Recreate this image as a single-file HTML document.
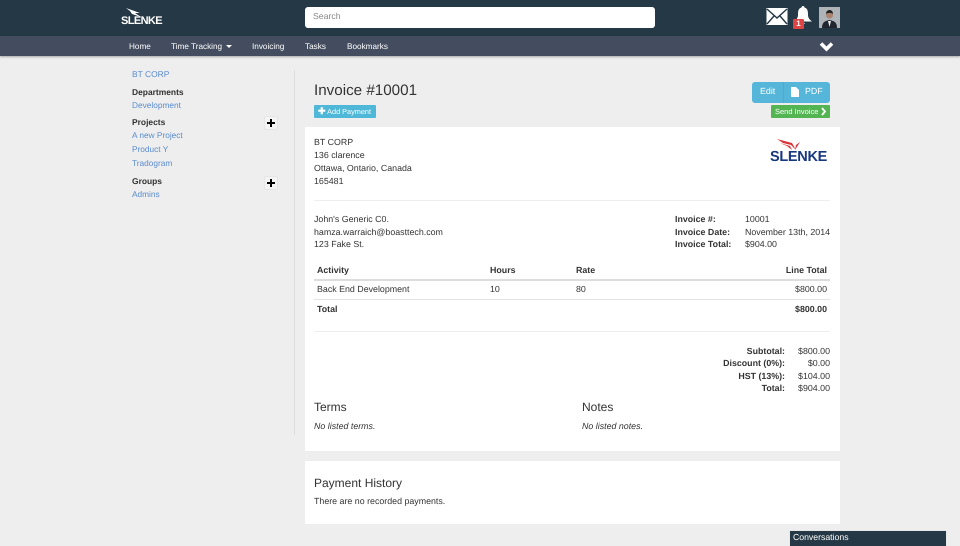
<!DOCTYPE html>
<html><head><meta charset="utf-8">
<style>
html,body{margin:0;padding:0}
body{width:960px;height:546px;overflow:hidden;background:#eee;position:relative;font-family:"Liberation Sans",Arial,sans-serif;font-size:8.85px;color:#333;text-rendering:geometricPrecision}
.a{position:absolute;white-space:nowrap;line-height:12px}
.b{font-weight:bold}
.l{color:#5b8dd0;font-size:8.3px}
.s{font-size:8.45px}
.n{font-size:8.2px}
.r{text-align:right}
.box{position:absolute;background:#fff}
.ln{position:absolute;height:1px;background:#eee}
.w{color:#fff}
.plus{position:absolute;left:264px;width:14px;height:14px;background:#f4f4f4;border-radius:2px;border:1px solid #e6e6e6;box-sizing:border-box}
.plus:before{content:"";position:absolute;left:2px;top:5px;width:8px;height:2px;background:#000}
.plus:after{content:"";position:absolute;left:5px;top:2px;width:2px;height:8px;background:#000}
</style></head><body>
<div style="position:absolute;left:0;top:0;width:960px;height:36px;background:#243845"></div>
<div style="position:absolute;left:0;top:36px;width:960px;height:20px;background:#434d5f;box-shadow:0 1px 2px rgba(0,0,0,.3)"></div>

<svg style="position:absolute;left:122px;top:7px" width="30" height="12" viewBox="0 0 30 12"><path d="M4 1l14 5-5 0 6 4-9-3-2-3z" fill="#fff"/></svg>
<div class="a b w" style="left:121px;top:15px;font-size:11px;letter-spacing:-.6px">SLENKE</div>

<div style="position:absolute;left:305px;top:7px;width:350px;height:21px;background:#fff;border-radius:3px"></div>
<div class="a" style="left:313px;top:10px;color:#888;font-size:8.7px">Search</div>

<svg style="position:absolute;left:766px;top:8px" width="22" height="17" viewBox="0 0 22 17"><rect width="21" height="17" x=".5" fill="#fff"/><path d="M1 1l10 9 10-9M1 16l7-8M21 16l-7-8" fill="none" stroke="#243845" stroke-width="1.4"/></svg>
<svg style="position:absolute;left:794px;top:6px" width="18" height="20" viewBox="0 0 18 20"><path d="M9 0c1 0 1.500.8 1.500 1.500C14 2.500 14 6 14 9c0 3 2 5 4 6.500H0C2 14 4 12 4 9c0-3 0-6.500 3.500-7.500C7.500.8 8 0 9 0z" fill="#fff"/><path d="M7 17h4l-2 2.500z" fill="#fff"/></svg>
<div style="position:absolute;left:793px;top:19px;width:11px;height:10px;background:#e04343;border-radius:1px;color:#fff;font-size:8px;line-height:10px;text-align:center;font-weight:bold">1</div>
<svg style="position:absolute;left:819px;top:7px" width="21" height="21" viewBox="0 0 21 21"><rect width="21" height="21" fill="#aeb4b8"/><path d="M3 21c0-6 3-7 7.500-8 4.500 1 7.500 2 7.500 8z" fill="#22262e"/><path d="M9 14h3l-1.500 6z" fill="#eee"/><circle cx="10.500" cy="8" r="3.600" fill="#a98470"/><path d="M7 7c0-3 2-4 3.500-4S14 4 14 7c-2-1.500-5-1.500-7 0z" fill="#222"/></svg>

<div class="a w n" style="left:129px;top:41px">Home</div>
<div class="a w n" style="left:171px;top:41px">Time Tracking</div>
<div style="position:absolute;left:226px;top:45px;border:3px solid transparent;border-top-color:#fff;border-bottom:0"></div>
<div class="a w n" style="left:252px;top:41px">Invoicing</div>
<div class="a w n" style="left:305px;top:41px">Tasks</div>
<div class="a w n" style="left:347px;top:41px">Bookmarks</div>
<svg style="position:absolute;left:819px;top:41px" width="15" height="11" viewBox="0 0 15 11"><path d="M2 2.500l5.500 5.500 5.500-5.500" fill="none" stroke="#fff" stroke-width="3.600"/></svg>

<div class="a l s" style="left:132px;top:68px">BT CORP</div>
<div class="a b s" style="left:132px;top:86px">Departments</div>
<div class="a l" style="left:132px;top:99px">Development</div>
<div class="a b s" style="left:132px;top:116px">Projects</div>
<div class="plus" style="top:116px"></div>
<div class="a l" style="left:132px;top:129px">A new Project</div>
<div class="a l" style="left:132px;top:143px">Product Y</div>
<div class="a l" style="left:132px;top:157px">Tradogram</div>
<div class="a b s" style="left:132px;top:175px">Groups</div>
<div class="plus" style="top:176px"></div>
<div class="a l" style="left:132px;top:188px">Admins</div>

<div style="position:absolute;left:294px;top:70px;width:1px;height:365px;background:#ddd"></div>

<div class="a" style="left:314px;top:82px;font-size:15.2px;line-height:18px">Invoice #10001</div>
<div style="position:absolute;left:314px;top:105px;width:62px;height:13px;background:#4fb8d8;border-radius:1px"></div>
<div class="a w" style="left:318px;top:105px;font-size:7.3px;line-height:13px"><b style="font-size:9px;line-height:12px">✚</b> Add Payment</div>

<div style="position:absolute;left:752px;top:82px;width:78px;height:21px;background:#55b6d9;border-radius:3px"></div>
<div style="position:absolute;left:783px;top:82px;width:1px;height:21px;background:#4dabcd"></div>
<div class="a w" style="left:760px;top:85px">Edit</div>
<svg style="position:absolute;left:791px;top:87px" width="8" height="10" viewBox="0 0 8 10"><path d="M0 0h5l3 3v7H0z" fill="#fff"/></svg>
<div class="a w" style="left:805px;top:85px">PDF</div>
<div style="position:absolute;left:771px;top:105px;width:59px;height:13px;background:#52b552;border-radius:1px"></div>
<div class="a w" style="left:775px;top:105px;font-size:7.5px;line-height:13px">Send Invoice</div>
<svg style="position:absolute;left:821px;top:107px" width="6" height="9" viewBox="0 0 6 9"><path d="M1 1l3 3.500-3 3.500" fill="none" stroke="#fff" stroke-width="1.800"/></svg>

<div class="box" style="left:305px;top:127px;width:535px;height:324px"></div>
<div class="box" style="left:305px;top:461px;width:535px;height:63px"></div>

<div class="a" style="left:314px;top:136px">BT CORP</div>
<div class="a" style="left:314px;top:149px">136 clarence</div>
<div class="a" style="left:314px;top:162px">Ottawa, Ontario, Canada</div>
<div class="a" style="left:314px;top:175px">165481</div>

<svg style="position:absolute;left:776px;top:138px" width="50" height="14" viewBox="0 0 50 14"><path d="M1 1l15 4 4 7-5-5-8-2zM4 5l10 3 2 4-5-4zM24 4l-5 8 1-5z" fill="#d9343a"/></svg>
<div class="a b" style="left:770px;top:150px;font-size:14.500px;line-height:15px;color:#17377f;letter-spacing:-.3px">SLENKE</div>

<div class="ln" style="left:314px;top:200px;width:516px"></div>

<div class="a" style="left:314px;top:213px">John's Generic C0.</div>
<div class="a" style="left:314px;top:226px">hamza.warraich@boasttech.com</div>
<div class="a" style="left:314px;top:238px">123 Fake St.</div>

<div class="a b" style="left:675px;top:213px">Invoice #:</div>
<div class="a b" style="left:675px;top:226px">Invoice Date:</div>
<div class="a b" style="left:675px;top:238px">Invoice Total:</div>
<div class="a" style="left:745px;top:213px">10001</div>
<div class="a" style="left:745px;top:226px">November 13th, 2014</div>
<div class="a" style="left:745px;top:238px">$904.00</div>

<div class="a b" style="left:317px;top:264px">Activity</div>
<div class="a b" style="left:490px;top:264px">Hours</div>
<div class="a b" style="left:576px;top:264px">Rate</div>
<div class="a b r" style="right:133px;top:264px">Line Total</div>
<div class="ln" style="left:314px;top:279px;width:516px;height:2px;background:#ddd"></div>
<div class="a" style="left:317px;top:283px">Back End Development</div>
<div class="a" style="left:490px;top:283px">10</div>
<div class="a" style="left:576px;top:283px">80</div>
<div class="a r" style="right:133px;top:283px">$800.00</div>
<div class="ln" style="left:314px;top:299px;width:516px;background:#e4e4e4"></div>
<div class="a b" style="left:317px;top:303px">Total</div>
<div class="a b r" style="right:133px;top:303px">$800.00</div>
<div class="ln" style="left:314px;top:331px;width:516px"></div>

<div class="a b r" style="right:175px;top:345px">Subtotal:</div><div class="a r" style="right:130px;top:345px">$800.00</div>
<div class="a b r" style="right:175px;top:357px">Discount (0%):</div><div class="a r" style="right:130px;top:357px">$0.00</div>
<div class="a b r" style="right:175px;top:370px">HST (13%):</div><div class="a r" style="right:130px;top:370px">$104.00</div>
<div class="a b r" style="right:175px;top:382px">Total:</div><div class="a r" style="right:130px;top:382px">$904.00</div>

<div class="a" style="left:314px;top:400px;font-size:12px;line-height:14px">Terms</div>
<div class="a" style="left:582px;top:400px;font-size:12px;line-height:14px">Notes</div>
<div class="a" style="left:314px;top:420px;font-style:italic">No listed terms.</div>
<div class="a" style="left:582px;top:420px;font-style:italic">No listed notes.</div>

<div class="a" style="left:314px;top:476px;font-size:12px;line-height:14px">Payment History</div>
<div class="a" style="left:314px;top:495px">There are no recorded payments.</div>

<div style="position:absolute;left:789px;top:530px;width:158px;height:16px;background:#243845;border:1px solid #e8e8e8;border-bottom:0;box-sizing:border-box"></div>
<div class="a w" style="left:793px;top:531px;font-size:8.7px">Conversations</div>
</body></html>
